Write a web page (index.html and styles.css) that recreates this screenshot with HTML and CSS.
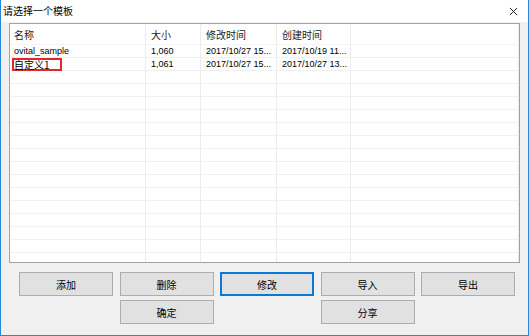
FILE: index.html
```html
<!DOCTYPE html>
<html lang="zh">
<head>
<meta charset="utf-8">
<title>请选择一个模板</title>
<link rel="stylesheet" href="styles.css">
</head>
<body>
<div class="window">
  <div class="titlebar">
    <span class="title">请选择一个模板</span>
    <svg class="close" width="10" height="10" viewBox="0 0 10 10"><path d="M1 1 L9 9 M9 1 L1 9" stroke="#222" stroke-width="1.1" fill="none"/></svg>
  </div>
  <div class="content">
    <div class="list">
      <div class="row head">
        <div class="c c1 cjk">名称</div><div class="c c2 cjk">大小</div><div class="c c3 cjk">修改时间</div><div class="c c4 cjk">创建时间</div><div class="c c5"></div>
      </div>
      <div class="row">
        <div class="c c1">ovital_sample</div><div class="c c2">1,060</div><div class="c c3">2017/10/27 15...</div><div class="c c4">2017/10/19 11...</div><div class="c c5"></div>
      </div>
      <div class="row">
        <div class="c c1"><span class="mark cjk">自定义1</span></div><div class="c c2">1,061</div><div class="c c3">2017/10/27 15...</div><div class="c c4">2017/10/27 13...</div><div class="c c5"></div>
      </div>
      <div class="row"><div class="c c1"></div><div class="c c2"></div><div class="c c3"></div><div class="c c4"></div><div class="c c5"></div></div>
      <div class="row"><div class="c c1"></div><div class="c c2"></div><div class="c c3"></div><div class="c c4"></div><div class="c c5"></div></div>
      <div class="row"><div class="c c1"></div><div class="c c2"></div><div class="c c3"></div><div class="c c4"></div><div class="c c5"></div></div>
      <div class="row"><div class="c c1"></div><div class="c c2"></div><div class="c c3"></div><div class="c c4"></div><div class="c c5"></div></div>
      <div class="row"><div class="c c1"></div><div class="c c2"></div><div class="c c3"></div><div class="c c4"></div><div class="c c5"></div></div>
      <div class="row"><div class="c c1"></div><div class="c c2"></div><div class="c c3"></div><div class="c c4"></div><div class="c c5"></div></div>
      <div class="row"><div class="c c1"></div><div class="c c2"></div><div class="c c3"></div><div class="c c4"></div><div class="c c5"></div></div>
      <div class="row"><div class="c c1"></div><div class="c c2"></div><div class="c c3"></div><div class="c c4"></div><div class="c c5"></div></div>
      <div class="row"><div class="c c1"></div><div class="c c2"></div><div class="c c3"></div><div class="c c4"></div><div class="c c5"></div></div>
      <div class="row"><div class="c c1"></div><div class="c c2"></div><div class="c c3"></div><div class="c c4"></div><div class="c c5"></div></div>
      <div class="row"><div class="c c1"></div><div class="c c2"></div><div class="c c3"></div><div class="c c4"></div><div class="c c5"></div></div>
      <div class="row"><div class="c c1"></div><div class="c c2"></div><div class="c c3"></div><div class="c c4"></div><div class="c c5"></div></div>
      <div class="row"><div class="c c1"></div><div class="c c2"></div><div class="c c3"></div><div class="c c4"></div><div class="c c5"></div></div>
      <div class="row"><div class="c c1"></div><div class="c c2"></div><div class="c c3"></div><div class="c c4"></div><div class="c c5"></div></div>
      <div class="row"><div class="c c1"></div><div class="c c2"></div><div class="c c3"></div><div class="c c4"></div><div class="c c5"></div></div>
    </div>
    <div class="buttons">
      <button class="btn">添加</button>
      <button class="btn">删除</button>
      <button class="btn default">修改</button>
      <button class="btn">导入</button>
      <button class="btn">导出</button>
      <button class="btn b-ok">确定</button>
      <button class="btn b-share">分享</button>
    </div>
  </div>
</div>
</body>
</html>
```
FILE: styles.css
```css
html, body {
  margin: 0;
  padding: 0;
  background: #f0f0f0;
}
.window {
  width: 529px;
  height: 336px;
  box-sizing: border-box;
  background: #f0f0f0;
  border-left: 1px solid #2b86d8;
  border-right: 1px solid #2b86d8;
  border-bottom: 1px solid #2b86d8;
  font-family: "Liberation Sans", "Noto Sans CJK SC", sans-serif;
  font-size: 9px;
  color: #000;
  display: flex;
  flex-direction: column;
  overflow: hidden;
}
.cjk {
  font-family: "Noto Sans CJK SC", sans-serif;
  font-size: 10px;
}
.titlebar {
  height: 22px;
  background: #fff;
  display: flex;
  align-items: center;
  justify-content: space-between;
  padding: 0 10px 0 2px;
  flex: none;
}
.title {
  font-family: "Noto Sans CJK SC", sans-serif;
  font-size: 10px;
  color: #000;
  line-height: 22px;
}
.close {
  display: block;
  width: 9px;
  height: 9px;
}
.content {
  flex: 1;
  padding: 1px 8px 0 8px;
  display: flex;
  flex-direction: column;
}
.list {
  height: 240px;
  box-sizing: border-box;
  background: #fff;
  border: 1px solid #a3a3a3;
  overflow: hidden;
  flex: none;
}
.row {
  display: flex;
  height: 13px;
  line-height: 13px;
  border-bottom: 1px solid #f0f0f0;
  box-sizing: border-box;
}
.row.head {
  height: 21px;
  line-height: 21px;
  color: #222;
  border-bottom: 1px solid #f4f4f4;
}
.c {
  box-sizing: border-box;
  border-right: 1px solid #ececec;
  padding-left: 5px;
  white-space: nowrap;
  overflow: visible;
  position: relative;
}
.c1 { width: 136px; padding-left: 4px; }
.c2 { width: 55px; }
.c3 { width: 76px; }
.c4 { width: 74px; }
.c5 { flex: 1; }
.mark {
  position: absolute;
  left: 2px;
  top: 0;
  width: 50px;
  height: 13px;
  box-sizing: border-box;
  border: 2px solid #e3262b;
  line-height: 10px;
  padding-left: 0;
  text-indent: -0px;
}
.buttons {
  margin-top: 9px;
  padding-left: 10px;
  display: grid;
  grid-template-columns: repeat(5, 94px);
  grid-auto-rows: 24px;
  column-gap: 6.5px;
  row-gap: 4px;
}
.btn {
  margin: 0;
  padding: 0;
  background: #e1e1e1;
  border: 1px solid #adadad;
  font-family: "Noto Sans CJK SC", sans-serif;
  font-size: 10px;
  color: #000;
}
.btn.default {
  border: 2px solid #0a78d7;
}
.b-ok { grid-column: 2; }
.b-share { grid-column: 4; }
```
